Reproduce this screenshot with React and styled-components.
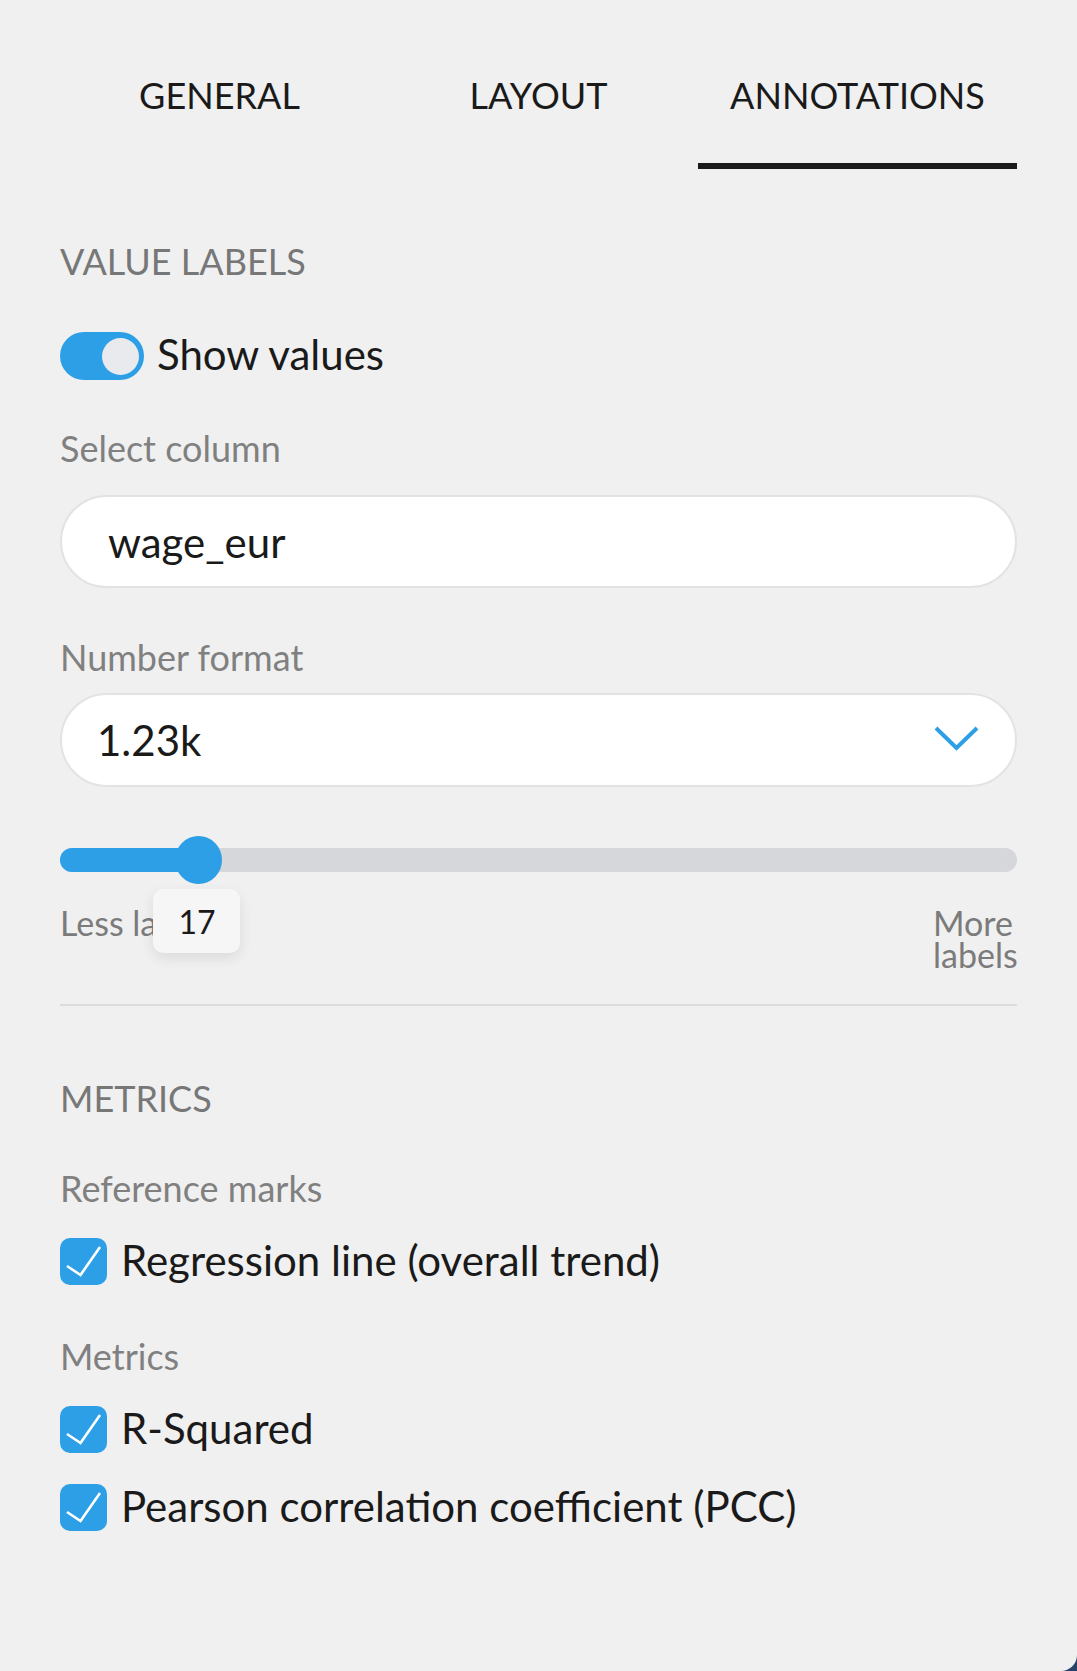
import React, { useState } from "react";
import styled, { createGlobalStyle } from "styled-components";

const GlobalStyle = createGlobalStyle`
  html, body {
    margin: 0;
    padding: 0;
    background: #27416b;
  }
  * {
    box-sizing: border-box;
  }
`;

const BLUE = "#2c9fe6";

const StyledPanel = styled.div`
  min-height: 100vh;
  background: #f0f0f0;
  border-bottom-right-radius: 16px;
  padding: 0 60px;
  font-family: Lato, "Open Sans", sans-serif;
  color: #1a1a1a;
`;

const StyledTabs = styled.div`
  display: grid;
  grid-template-columns: repeat(3, 1fr);
`;

const StyledTab = styled.button`
  font-family: inherit;
  font-size: 36px;
  line-height: 43px;
  padding: 74px 0 46px;
  border: none;
  border-bottom: 6px solid ${props => (props.$active ? "#1a1a1a" : "transparent")};
  background: none;
  color: #1a1a1a;
  cursor: pointer;
`;

const StyledSection = styled.section`
  padding-top: 71px;
`;

const StyledSectionTitle = styled.h3`
  margin: 0;
  font-size: 36px;
  line-height: 43px;
  font-weight: 400;
  color: #777;
`;

const StyledFieldLabel = styled.div`
  margin-top: ${props => props.$top}px;
  font-size: 36px;
  line-height: 43px;
  color: #808080;
`;

const StyledToggleRow = styled.label`
  display: flex;
  align-items: center;
  gap: 13px;
  margin-top: 49px;
  cursor: pointer;
`;

const StyledToggle = styled.span`
  display: flex;
  align-items: center;
  justify-content: ${props => (props.$on ? "flex-end" : "flex-start")};
  width: 84px;
  height: 48px;
  padding: 0 5px;
  border-radius: 24px;
  background: ${props => (props.$on ? BLUE : "#c9ccd1")};
`;

const StyledKnob = styled.span`
  width: 37px;
  height: 37px;
  border-radius: 50%;
  background: #e9eaed;
`;

// nudged up a little so the text sits like the reference beside the control
const StyledOptionText = styled.span`
  font-size: 42px;
  line-height: 40px;
  color: #1a1a1a;
  margin-bottom: 4px;
`;

const StyledInput = styled.input`
  display: block;
  width: 100%;
  height: 93px;
  margin-top: 25px;
  padding: 0 46px;
  border: 2px solid #e3e3e3;
  border-radius: 47px;
  background: #fff;
  font-family: inherit;
  font-size: 42px;
  color: #1a1a1a;
  outline: none;
`;

const StyledSelect = styled.div`
  display: flex;
  align-items: center;
  justify-content: space-between;
  height: 94px;
  margin-top: 14px;
  padding: 0 36px 0 35px;
  border: 2px solid #e3e3e3;
  border-radius: 47px;
  background: #fff;
  font-size: 42px;
  color: #1a1a1a;
  cursor: pointer;
`;

const StyledChevron = styled.svg`
  margin-bottom: 4px;
`;

const StyledSliderRoot = styled.div`
  position: relative;
  display: flex;
  align-items: center;
  height: 48px;
  margin-top: 49px;
`;

const StyledTrack = styled.div`
  position: relative;
  width: 100%;
  height: 24px;
  border-radius: 12px;
  background: #d5d7da;
  overflow: hidden;
`;

const StyledRange = styled.div`
  height: 100%;
  background: ${BLUE};
`;

const StyledThumb = styled.div`
  position: absolute;
  top: 0;
  width: 47px;
  height: 48px;
  margin-left: -23.5px;
  border-radius: 50%;
  background: ${BLUE};
`;

const StyledValueTip = styled.div`
  position: absolute;
  top: 53px;
  z-index: 2;
  width: 87px;
  height: 64px;
  margin-left: -45px;
  display: flex;
  align-items: center;
  justify-content: center;
  border-radius: 10px;
  background: #f6f6f6;
  box-shadow: 0 5px 14px rgba(0, 0, 0, 0.09);
  font-size: 32px;
  color: #1a1a1a;
`;

const StyledSliderLabels = styled.div`
  display: flex;
  justify-content: space-between;
  align-items: flex-start;
  margin-top: 23px;
  font-size: 34px;
  line-height: 32px;
  color: #7b7b7b;
`;

const StyledEndLabel = styled.span`
  white-space: ${props => (props.$wrap ? "normal" : "nowrap")};
  max-width: ${props => (props.$wrap ? "84px" : "none")};
`;

const StyledDivider = styled.div`
  height: 2px;
  margin-top: 33px;
  background: #dcdcdc;
`;

const StyledCheckRow = styled.label`
  display: flex;
  align-items: center;
  gap: 14px;
  margin-top: ${props => props.$top}px;
  cursor: pointer;
`;

const StyledCheckbox = styled.span`
  display: flex;
  align-items: center;
  justify-content: center;
  flex: none;
  width: 47px;
  height: 47px;
  border-radius: 10px;
  background: ${props => (props.$checked ? BLUE : "#fff")};
  border: ${props => (props.$checked ? "none" : "2px solid #ccc")};
`;

const Chevron = () => (
  <StyledChevron width="45" height="25" viewBox="0 0 45 25">
    <polyline points="2,2 22.5,22 43,2" fill="none" stroke={BLUE} strokeWidth="4" />
  </StyledChevron>
);

const CheckMark = () => (
  <svg width="47" height="47" viewBox="0 0 47 47">
    <polyline points="7,28 20.5,37 40,9" fill="none" stroke="#fff" strokeWidth="2.6" />
  </svg>
);

const CheckItem = ({ top, label, checked, onToggle }) => (
  <StyledCheckRow $top={top} onClick={onToggle}>
    <StyledCheckbox $checked={checked}>{checked && <CheckMark />}</StyledCheckbox>
    <StyledOptionText>{label}</StyledOptionText>
  </StyledCheckRow>
);

const LabelSlider = ({ value, min, max }) => {
  const frac = (value - min) / (max - min);
  const pos = `calc(23.5px + ${frac} * (100% - 47px))`;
  return (
    <StyledSliderRoot>
      <StyledTrack>
        <StyledRange style={{ width: pos }} />
      </StyledTrack>
      <StyledThumb style={{ left: pos }} />
      <StyledValueTip style={{ left: pos }}>{value}</StyledValueTip>
    </StyledSliderRoot>
  );
};

const App = () => {
  const [tab, setTab] = useState("ANNOTATIONS");
  const [showValues, setShowValues] = useState(true);
  const [checks, setChecks] = useState({ regression: true, rsq: true, pcc: true });

  const flip = key => setChecks(prev => ({ ...prev, [key]: !prev[key] }));

  return (
    <>
      <GlobalStyle />
      <StyledPanel>
        <StyledTabs>
          {["GENERAL", "LAYOUT", "ANNOTATIONS"].map(name => (
            <StyledTab key={name} $active={tab === name} onClick={() => setTab(name)}>
              {name}
            </StyledTab>
          ))}
        </StyledTabs>

        <StyledSection>
          <StyledSectionTitle>VALUE LABELS</StyledSectionTitle>

          <StyledToggleRow onClick={() => setShowValues(prev => !prev)}>
            <StyledToggle $on={showValues}>
              <StyledKnob />
            </StyledToggle>
            <StyledOptionText>Show values</StyledOptionText>
          </StyledToggleRow>

          <StyledFieldLabel $top={47}>Select column</StyledFieldLabel>
          <StyledInput defaultValue="wage_eur" />

          <StyledFieldLabel $top={48}>Number format</StyledFieldLabel>
          <StyledSelect>
            <span>1.23k</span>
            <Chevron />
          </StyledSelect>

          <LabelSlider value={17} min={5} max={100} />
          <StyledSliderLabels>
            <StyledEndLabel>Less labels</StyledEndLabel>
            <StyledEndLabel $wrap>More labels</StyledEndLabel>
          </StyledSliderLabels>

          <StyledDivider />
        </StyledSection>

        <StyledSection>
          <StyledSectionTitle>METRICS</StyledSectionTitle>

          <StyledFieldLabel $top={47}>Reference marks</StyledFieldLabel>
          <CheckItem
            top={28}
            label="Regression line (overall trend)"
            checked={checks.regression}
            onToggle={() => flip("regression")}
          />

          <StyledFieldLabel $top={50}>Metrics</StyledFieldLabel>
          <CheckItem top={28} label="R-Squared" checked={checks.rsq} onToggle={() => flip("rsq")} />
          <CheckItem
            top={31}
            label="Pearson correlation coefficient (PCC)"
            checked={checks.pcc}
            onToggle={() => flip("pcc")}
          />
        </StyledSection>
      </StyledPanel>
    </>
  );
};

export default App;
